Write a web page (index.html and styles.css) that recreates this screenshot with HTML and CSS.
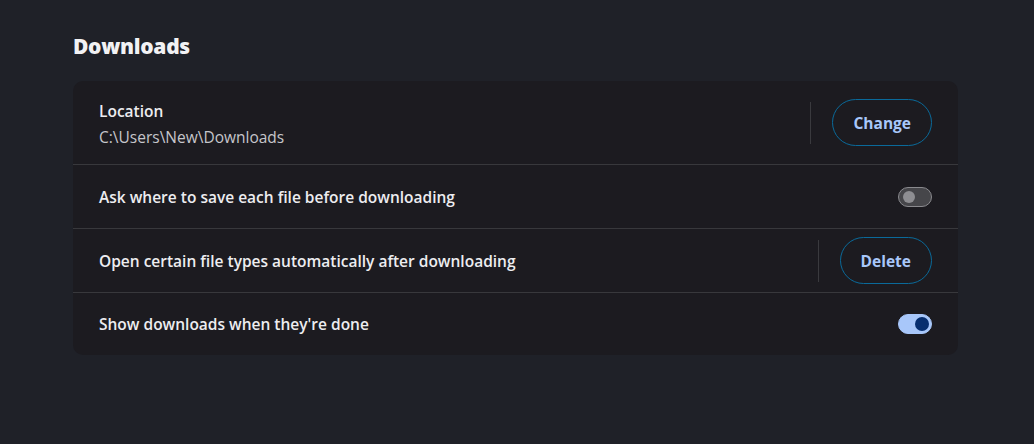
FILE: index.html
```html
<!DOCTYPE html>
<html lang="en">
  <head>
    <meta charset="UTF-8" />
    <title>Downloads settings</title>
    <link rel="stylesheet" href="styles.css">
  </head>
  <body>
    <section class="settings">
      <h2 class="section-title">Downloads</h2>

      <div class="card">
        <div class="row row-tall">
          <div class="row-text">
            <div class="label">Location</div>
            <div class="sublabel">C:\Users\New\Downloads</div>
          </div>
          <div class="sep"></div>
          <button class="pill-btn">Change</button>
        </div>

        <div class="row">
          <div class="label">Ask where to save each file before downloading</div>
          <span class="toggle"><span class="knob"></span></span>
        </div>

        <div class="row">
          <div class="label">Open certain file types automatically after downloading</div>
          <div class="sep"></div>
          <button class="pill-btn">Delete</button>
        </div>

        <div class="row">
          <div class="label">Show downloads when they're done</div>
          <span class="toggle on"><span class="knob"></span></span>
        </div>
      </div>
    </section>
  </body>
</html>
```

FILE: styles.css
```css
body {
  margin: 0;
  background-color: #1f2128;
  font-family: "Open Sans", "Noto Sans", sans-serif;
  color: #ededf0;
}
.settings {
  width: 885px;
  padding: 33px 0 0 73px;
}
.section-title {
  margin: 0 0 21px;
  font-size: 21px;
  font-weight: 800;
  line-height: 27px;
  letter-spacing: -0.3px;
  color: #f2f2f4;
}
.card {
  background-color: #1c1b20;
  border-radius: 10px;
}
.row {
  display: flex;
  align-items: center;
  height: 63px;
  padding: 0 26px;
  border-top: 1px solid #38383c;
}
.row:first-child {
  border-top: none;
}
.row:last-child {
  height: 62px;
}
.row-tall {
  height: 83px;
}
.row-text {
  flex: 1;
  padding-top: 3px;
}
.row > .label {
  flex: 1;
}
.label {
  font-size: 15.5px;
  font-weight: 600;
  line-height: 26px;
}
.sublabel {
  font-size: 15.5px;
  font-weight: 500;
  line-height: 26px;
  color: #c6c6cb;
}
.sep {
  width: 1px;
  height: 42px;
  background-color: #3a3a3e;
  margin-right: 21px;
}
.pill-btn {
  height: 47px;
  padding: 0 20px;
  border: 1px solid #0a6a9a;
  border-radius: 24px;
  background: transparent;
  color: #a8c7fa;
  font-family: inherit;
  font-size: 15.5px;
  font-weight: 700;
}
.toggle {
  position: relative;
  display: inline-block;
  width: 34px;
  height: 20px;
  border-radius: 10px;
  box-sizing: border-box;
  background-color: #46464a;
  border: 1px solid #8a8a8e;
}
.toggle .knob {
  position: absolute;
  left: 4px;
  top: 3px;
  width: 12px;
  height: 12px;
  border-radius: 50%;
  background-color: #8e8e92;
}
.toggle.on {
  background-color: #a8c7fa;
  border-color: #a8c7fa;
}
.toggle.on .knob {
  left: 16px;
  top: 2px;
  width: 14px;
  height: 14px;
  background-color: #062e6f;
}
```
